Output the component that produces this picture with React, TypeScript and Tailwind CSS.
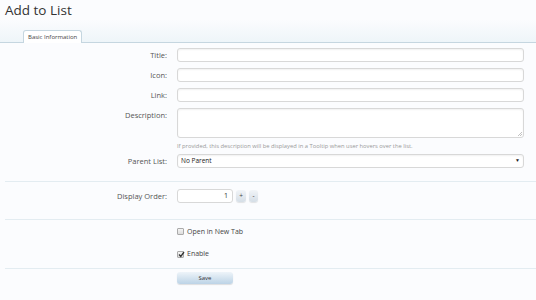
const labelCls = "w-[167px] shrink-0 text-right text-[7.5px] text-[#555]";
const inputCls =
  "h-[14px] w-[347px] rounded-[3px] border border-[#d8d8d8] bg-white shadow-[inset_0_1px_2px_rgba(0,0,0,0.06)]";
const spinBtn =
  "block h-[12px] rounded-[3px] bg-gradient-to-b from-[#f2f5f8] to-[#d5dee6] text-center text-[6.5px] leading-[12px] text-[#444] shadow-[0_1px_1px_rgba(0,0,0,0.1)]";

function Row({ label, children, className = "" }: { label: string; children: React.ReactNode; className?: string }) {
  return (
    <div className={`flex items-start ${className}`}>
      <div className={`${labelCls} pt-[2px]`}>{label}</div>
      <div className="ml-[10px]">{children}</div>
    </div>
  );
}

export default function App() {
  return (
    <div className="h-[300px] w-[536px] overflow-hidden bg-[#fbfcfe] text-[#333]" style={{ fontFamily: '"Open Sans", sans-serif' }}>
      <h1 className="px-[5px] pt-[1px] text-[13.5px] leading-[19px] text-[#333]">Add to List</h1>

      <div className="flex h-[23px] items-end border-b border-[#c5d6e0] bg-gradient-to-b from-[#fbfcfe] to-[#eef5f9] pl-[5px]">
        <div className="ml-[18px] mb-[-1px] h-[13px] rounded-t-[3px] border border-b-0 border-[#c5d6e0] bg-white px-[4px] text-[6px] leading-[12px] text-[#444]">
          Basic Information
        </div>
      </div>

      <div className="pt-[5px]">
        <Row label="Title:">
          <div className={inputCls} />
        </Row>
        <Row label="Icon:" className="mt-[6px]">
          <div className={inputCls} />
        </Row>
        <Row label="Link:" className="mt-[6px]">
          <div className={inputCls} />
        </Row>
        <Row label="Description:" className="mt-[6px]">
          <div className={`${inputCls} relative h-[30px]`}>
            <svg className="absolute bottom-[1px] right-[1px]" width="4" height="4" viewBox="0 0 4 4">
              <path d="M4 0L0 4M4 2L2 4" stroke="#999" strokeWidth="0.6" />
            </svg>
          </div>
          <div className="mt-[4px] text-[5.8px] text-[#999]">
            If provided, this description will be displayed in a Tooltip when user hovers over the list.
          </div>
        </Row>
        <Row label="Parent List:" className="mt-[3px]">
          <div className={`${inputCls} flex items-center justify-between px-[3px] text-[6.5px] text-[#222]`}>
            <span>No Parent</span>
            <span className="text-[5px]">▼</span>
          </div>
        </Row>

        <div className="ml-[5px] mt-[13px] border-t border-[#e3ecf1]" />

        <Row label="Display Order:" className="mt-[7px]">
          <div className="flex items-center gap-[3px]">
            <div className="h-[14px] w-[56px] rounded-[3px] border border-[#d8d8d8] bg-white pr-[4px] text-right text-[7px] leading-[12px]">
              1
            </div>
            <button className={`${spinBtn} w-[10px]`}>+</button>
            <button className={`${spinBtn} w-[9px]`}>-</button>
          </div>
        </Row>

        <div className="ml-[5px] mt-[16px] border-t border-[#e3ecf1]" />

        <div className="ml-[177px] mt-[7px] flex flex-col gap-[12px] text-[7px] text-[#444]">
          <label className="flex items-center gap-[3px]">
            <span className="inline-block h-[7px] w-[7px] rounded-[1px] border border-[#aaa] bg-gradient-to-b from-[#f4f4f4] to-[#ddd]" />
            Open in New Tab
          </label>
          <label className="flex items-center gap-[3px]">
            <span className="relative inline-block h-[7px] w-[7px] rounded-[1px] border border-[#aaa] bg-gradient-to-b from-[#f4f4f4] to-[#ddd]">
              <svg className="absolute left-[0px] top-[-1px]" width="7" height="7" viewBox="0 0 7 7">
                <path d="M1 3.5L2.8 5.5L6 1" stroke="#333" strokeWidth="1.3" fill="none" />
              </svg>
            </span>
            Enable
          </label>
        </div>

        <div className="ml-[5px] mt-[8px] border-t border-[#e3ecf1]" />

        <div className="ml-[177px] mt-[3px] flex">
          <button className="h-[12px] w-[56px] rounded-[3px] bg-gradient-to-b from-[#eef4f9] to-[#bcd3e6] text-[6px] leading-[12px] text-[#333] shadow-[0_1px_1px_rgba(0,0,0,0.12)]">
            Save
          </button>
        </div>
      </div>
    </div>
  );
}
